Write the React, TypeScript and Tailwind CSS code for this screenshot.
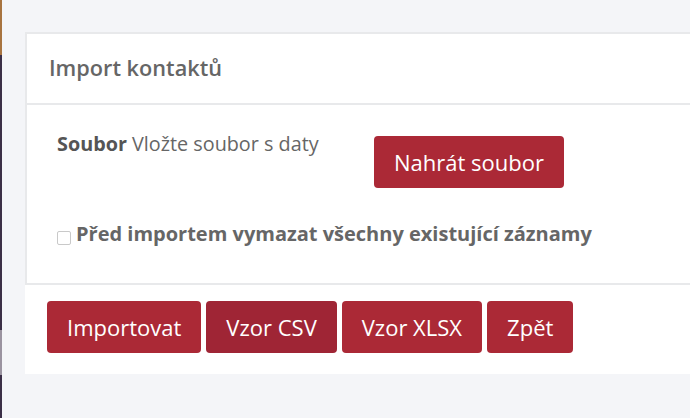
import React from 'react';

const btn =
  "h-[52px] px-5 rounded-[4px] text-white text-[22px] leading-none flex items-center";

export default function App() {
  return (
    <div
      className="w-[690px] h-[418px] bg-[#f4f5f8] flex overflow-hidden"
      style={{ fontFamily: '"Open Sans", sans-serif' }}
    >
      {/* sidebar edge */}
      <div className="w-[2px] flex flex-col shrink-0">
        <div className="h-[55px] bg-[#a87440]" />
        <div className="h-[275px] bg-[#3b2f47]" />
        <div className="h-[45px] bg-[#9a93a0]" />
        <div className="flex-1 bg-[#3b2f47]" />
      </div>

      <div className="flex-1 pl-[23px] pt-[32px]">
        <div className="w-[700px] bg-white">
          <div className="border-2 border-[#e8e9eb]">
            <div className="h-[71px] pl-[22px] flex items-center border-b-2 border-[#e8e9eb]">
              <h1 className="text-[21.7px] font-semibold text-[#666]">Import kontaktů</h1>
            </div>
            <div className="h-[178px] pl-[30px] pt-[31px]">
              <div className="flex items-start">
                <p className="text-[19.8px] leading-none text-[#666] w-[317px] -mt-[2px]">
                  <b className="font-bold text-[#555]">Soubor</b> Vložte soubor s daty
                </p>
                <button className={`${btn} w-[190px] justify-center bg-[#ab2936]`}>Nahrát soubor</button>
              </div>
              <label className="flex items-center mt-[35px]">
                <span className="w-[14px] h-[14px] border border-[#c9c9c9] rounded-[2px] bg-white mt-[8px] mr-[5px] shrink-0" />
                <span className="text-[20px] leading-none font-bold text-[#666]">
                  Před importem vymazat všechny existující záznamy
                </span>
              </label>
            </div>
          </div>
          <div className="h-[89px] pl-[22px] pt-[16px] flex gap-[5px] items-start">
            <button className={`${btn} bg-[#ab2936]`}>Importovat</button>
            <button className={`${btn} bg-[#9f2535]`}>Vzor CSV</button>
            <button className={`${btn} bg-[#ab2936]`}>Vzor XLSX</button>
            <button className={`${btn} bg-[#ab2936]`}>Zpět</button>
          </div>
        </div>
      </div>
    </div>
  );
}
